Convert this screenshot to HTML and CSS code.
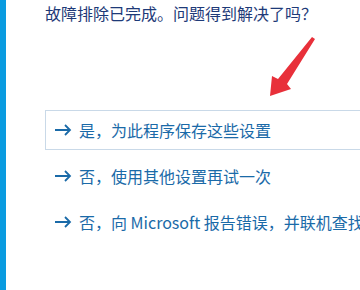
FILE: index.html
```html
<!DOCTYPE html>
<html>
<head>
    <meta charset="utf-8" />
    <title>疑难解答</title>
    <link rel="stylesheet" href="styles.css">
</head>
<body>
    <div class="page">
        <div class="sideBar"></div>
        <main class="content">
            <p class="title">故障排除已完成。问题得到解决了吗？</p>
            <div class="options">
                <div class="option selected">
                    <svg class="goArrow" width="18" height="12" viewBox="0 0 18 12"><path d="M1 6H16M11 1L16 6L11 11" fill="none" stroke="#1a6aa8" stroke-width="1.8"/></svg>
                    <span>是，为此程序保存这些设置</span>
                </div>
                <div class="option">
                    <svg class="goArrow" width="18" height="12" viewBox="0 0 18 12"><path d="M1 6H16M11 1L16 6L11 11" fill="none" stroke="#1a6aa8" stroke-width="1.8"/></svg>
                    <span>否，使用其他设置再试一次</span>
                </div>
                <div class="option">
                    <svg class="goArrow" width="18" height="12" viewBox="0 0 18 12"><path d="M1 6H16M11 1L16 6L11 11" fill="none" stroke="#1a6aa8" stroke-width="1.8"/></svg>
                    <span>否，向 Microsoft 报告错误，并联机查找解决方案</span>
                </div>
            </div>
        </main>
    </div>
    <!-- red annotation arrow drawn over the screenshot -->
    <svg class="pointer" width="360" height="290" viewBox="0 0 360 290">
        <polygon points="312,37 315,39 287,84 291,89 270,96 272,76 278,79" fill="#e8303a"/>
    </svg>
</body>
</html>
```

FILE: styles.css
```css
body {
    margin: 0;
    font-family: "Noto Sans CJK SC", "Noto Sans", sans-serif;
    background-color: white;
    overflow: hidden;
}
p {
    margin: 0;
}
.page {
    display: flex;
    flex-direction: row;
    width: 360px;
    height: 290px;
    overflow: hidden;
}
.sideBar {
    width: 6px;
    flex-shrink: 0;
    background-color: #0a9be0;
}
.content {
    flex-grow: 1;
    padding-left: 39px;
    padding-top: 2px;
    min-width: 0;
}
.title {
    font-size: 16px;
    line-height: 22px;
    color: #1e3a78;
    white-space: nowrap;
}
.options {
    display: flex;
    flex-direction: column;
    gap: 6px;
    margin-top: 86px;
}
.option {
    display: flex;
    flex-direction: row;
    align-items: center;
    gap: 7px;
    height: 40px;
    box-sizing: border-box;
    padding-left: 8px;
    width: 340px;
    border: 1px solid transparent;
    font-size: 16px;
    color: #1a6aa8;
    white-space: nowrap;
}
.selected {
    border-color: #c9d9e8;
}
.goArrow {
    flex-shrink: 0;
}
.pointer {
    position: absolute;
    top: 0;
    left: 0;
    pointer-events: none;
}
```
